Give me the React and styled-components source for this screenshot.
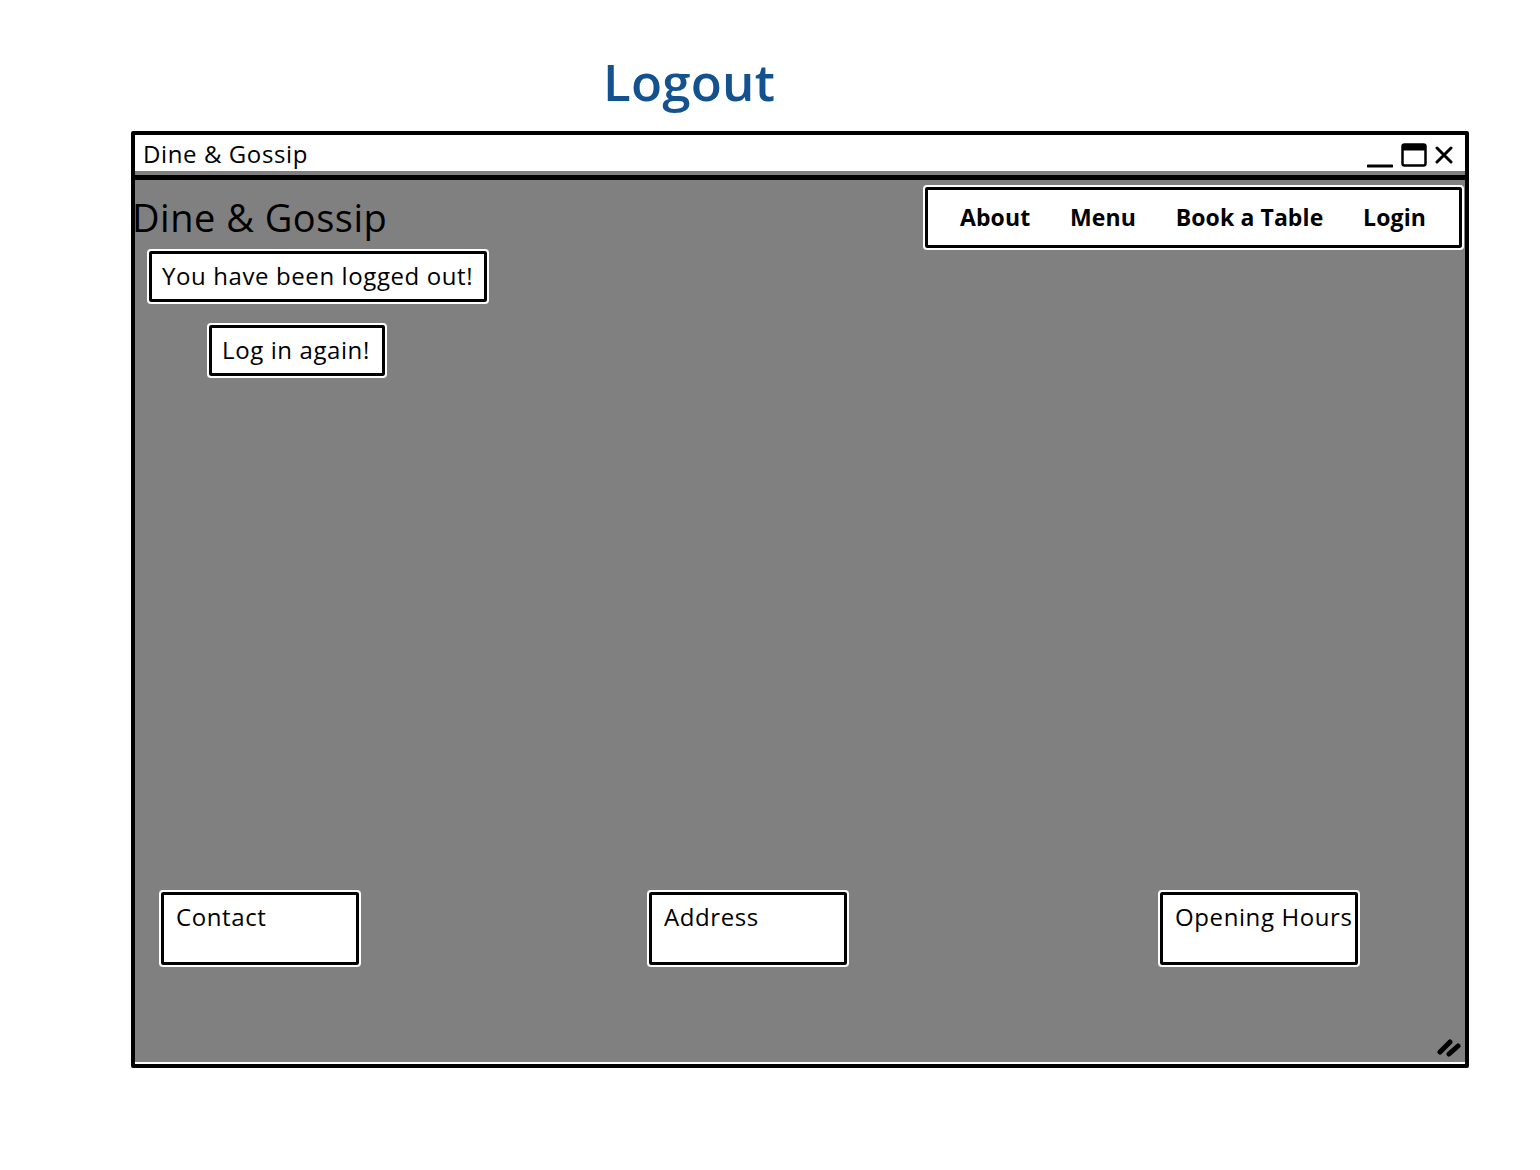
import React from "react";
import styled, { createGlobalStyle } from "styled-components";

const Global = createGlobalStyle`
  html, body { margin: 0; padding: 0; background: #fff; }
  body { font-family: "Open Sans", "Noto Sans", sans-serif; color: #000; }
`;

const Page = styled.div`
  width: 1540px;
  height: 1170px;
  display: flex;
  flex-direction: column;
  box-sizing: border-box;
  padding-top: 48px;
`;

const PageTitle = styled.h1`
  margin: 0 0 17px 0;
  padding-left: 603px;
  height: 66px;
  line-height: 66px;
  font-family: "Open Sans", sans-serif;
  font-weight: 600;
  font-size: 51px;
  letter-spacing: 0.2px;
  color: #13518f;
`;

const Window = styled.div`
  margin-left: 131px;
  width: 1338px;
  height: 937px;
  box-sizing: border-box;
  border: 4px solid #000;
  border-radius: 2px;
  background: #808080;
  display: flex;
  flex-direction: column;
  position: relative;
`;

const TitleBar = styled.div`
  height: 36px;
  background: #fff;
  display: flex;
  align-items: center;
  justify-content: space-between;
  padding: 0 12px 0 8px;
  margin-bottom: 4px;
`;

const TitleText = styled.span`
  font-size: 24px;
  letter-spacing: 0.6px;
  line-height: 1;
  padding-top: 2px;
`;

const Controls = styled.div`
  display: flex;
  align-items: center;
  gap: 8px;
  padding-top: 4px;
`;

const Content = styled.div`
  flex: 1;
  border-top: 5px solid #000;
  border-bottom: 2px solid #fff;
  display: flex;
  flex-direction: column;
  align-items: flex-start;
  padding-top: 7px;
  position: relative;
`;

const Header = styled.div`
  align-self: stretch;
  display: flex;
  align-items: center;
  justify-content: space-between;
  padding-right: 3px;
`;

const SiteName = styled.h2`
  margin: -2px 0 0 -3px;
  font-weight: 400;
  font-size: 38px;
  letter-spacing: 0.5px;
  line-height: 1;
`;

const SketchBox = styled.div`
  background: #fff;
  border: 3px solid #000;
  border-radius: 2px;
  outline: 2px solid #fff;
  box-sizing: border-box;
`;

const Nav = styled(SketchBox)`
  width: 537px;
  height: 61px;
  display: flex;
  align-items: center;
  justify-content: space-between;
  padding: 0 33px 2px 32px;
`;

const NavItem = styled.a`
  font-weight: 700;
  font-size: 23px;
  letter-spacing: 0.1px;
  color: #000;
  text-decoration: none;
`;

const Notice = styled(SketchBox)`
  margin: 3px 0 0 14px;
  width: 338px;
  height: 51px;
  display: flex;
  align-items: center;
  padding: 0 0 3px 10px;
  font-size: 24px;
  letter-spacing: 0.6px;
  white-space: nowrap;
`;

const ActionButton = styled(SketchBox)`
  margin: 23px 0 0 74px;
  width: 176px;
  height: 51px;
  display: flex;
  align-items: center;
  padding: 0 0 3px 10px;
  font-size: 24px;
  letter-spacing: 0.6px;
  white-space: nowrap;
`;

const Footer = styled.div`
  margin-top: auto;
  margin-bottom: 97px;
  display: flex;
  padding-left: 26px;
`;

const InfoBox = styled(SketchBox)`
  margin-left: ${(p) => p.$offset || 0}px;
  width: 198px;
  height: 73px;
  padding: 5px 0 0 12px;
  font-size: 24px;
  letter-spacing: 0.6px;
  line-height: 34px;
  white-space: nowrap;
  overflow: visible;
`;

const Grip = styled.svg`
  position: absolute;
  right: 3px;
  bottom: 5px;
`;

const Minimize = () => (
  <svg width="26" height="26" viewBox="0 0 26 26">
    <path d="M1 24 L25 24" stroke="#000" strokeWidth="3" strokeLinecap="round" />
  </svg>
);
const Maximize = () => (
  <svg width="26" height="24" viewBox="0 0 26 24">
    <rect x="1.5" y="1.5" width="23" height="21" rx="2" fill="#fff" stroke="#000" strokeWidth="2.5" />
    <rect x="1.5" y="1.5" width="23" height="6" fill="#000" />
  </svg>
);
const Close = () => (
  <svg width="18" height="18" viewBox="0 0 18 18">
    <path d="M2 2 L16 16 M16 2 L2 16" stroke="#000" strokeWidth="3" strokeLinecap="round" />
  </svg>
);

export default function App() {
  return (
    <>
      <Global />
      <Page>
        <PageTitle>Logout</PageTitle>
        <Window>
          <TitleBar>
            <TitleText>Dine &amp; Gossip</TitleText>
            <Controls>
              <Minimize />
              <Maximize />
              <Close />
            </Controls>
          </TitleBar>
          <Content>
            <Header>
              <SiteName>Dine &amp; Gossip</SiteName>
              <Nav>
                <NavItem>About</NavItem>
                <NavItem>Menu</NavItem>
                <NavItem>Book a Table</NavItem>
                <NavItem>Login</NavItem>
              </Nav>
            </Header>
            <Notice>You have been logged out!</Notice>
            <ActionButton>Log in again!</ActionButton>
            <Footer>
              <InfoBox>Contact</InfoBox>
              <InfoBox $offset={290}>Address</InfoBox>
              <InfoBox $offset={313}>Opening Hours</InfoBox>
            </Footer>
            <Grip width="26" height="24" viewBox="0 0 26 24">
              <path d="M4 19 L14 9 M13 21 L22 13" stroke="#000" strokeWidth="5" strokeLinecap="round" />
            </Grip>
          </Content>
        </Window>
      </Page>
    </>
  );
}
